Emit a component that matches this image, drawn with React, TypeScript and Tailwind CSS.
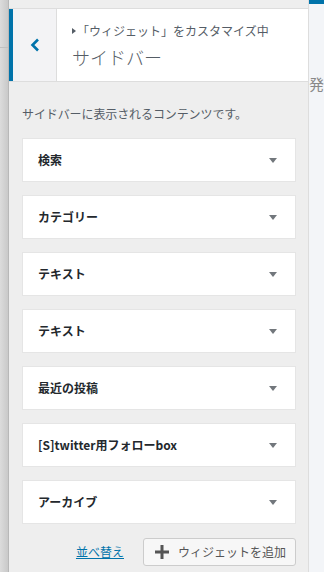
import { FC } from "react";

const widgets = [
  "検索",
  "カテゴリー",
  "テキスト",
  "テキスト",
  "最近の投稿",
  "[S]twitter用フォローbox",
  "アーカイブ",
];

const WidgetRow: FC<{ title: string }> = ({ title }) => (
  <div className="flex items-center h-[44px] w-[274px] ml-[13px] bg-white border border-[#e5e5e5] pl-[15px] pr-[18px]">
    <span className="flex-1 text-[12px] font-bold text-[#23282d]">{title}</span>
    {/* toggle arrow */}
    <svg width="8" height="5" viewBox="0 0 8 5" className="mt-[1px]">
      <path d="M0 0h8L4 5z" fill="#72777c" />
    </svg>
  </div>
);

const App: FC = () => (
  <div
    className="w-[324px] h-[572px] flex overflow-hidden bg-[#f3f5f8]"
    style={{ fontFamily: '"Noto Sans CJK JP", "Noto Sans", sans-serif' }}
  >
    {/* Left edge strip */}
    <div className="w-[9px] flex flex-col bg-gradient-to-r from-[#dcdcdc] to-[#c9c9c9] border-r border-[#b8b8b8]">
      <div className="h-[48px] border-b border-[#c0c0c0]" />
    </div>

    {/* Customizer panel */}
    <div className="w-[300px] flex flex-col bg-[#eeeeee] border-r border-[#dddddd]">
      <div className="h-[9px] border-b border-[#dddddd]" />

      {/* Header */}
      <div className="flex h-[73px] bg-white border-b border-[#dddddd]">
        <button className="w-[48px] flex items-center justify-center bg-[#f3f3f5] border-l-4 border-[#0073aa] border-r border-r-[#dddddd]">
          <svg width="10" height="14" viewBox="0 0 10 14">
            <path d="M8 1.5L2.5 7 8 12.5" stroke="#0073aa" strokeWidth="2.6" fill="none" />
          </svg>
        </button>
        <div className="flex flex-col pl-[15px] pt-[13px] text-[#555d66]">
          <div className="flex items-center text-[12px] leading-[18px]">
            <svg width="4" height="6" viewBox="0 0 4 6" className="mr-[1px]">
              <path d="M0 0l4 3-4 3z" fill="#555d66" />
            </svg>
            「ウィジェット」をカスタマイズ中
          </div>
          <div className="text-[18px] leading-[24px] font-light mt-[5px]">サイドバー</div>
        </div>
      </div>

      {/* Description */}
      <p className="px-[13px] pt-[25px] pb-[17px] text-[12px] leading-[14px] tracking-[-0.1px] text-[#555d66]">
        サイドバーに表示されるコンテンツです。
      </p>

      {/* Widgets */}
      <div className="flex flex-col gap-[13px]">
        {widgets.map((w, i) => (
          <WidgetRow key={i} title={w} />
        ))}
      </div>

      {/* Actions */}
      <div className="flex items-center justify-end pr-[12px] mt-[14px]">
        <a className="text-[12px] text-[#0073aa] underline mr-[19px]">並べ替え</a>
        <button className="flex items-center h-[28px] w-[153px] pl-[11px] bg-[#f7f7f7] border border-[#cccccc] rounded-[3px] text-[12px] text-[#555555]">
          <svg width="14" height="14" viewBox="0 0 14 14" className="mr-[9px]">
            <path d="M5.5 0h3v5.5H14v3H8.5V14h-3V8.5H0v-3h5.5z" fill="#555555" />
          </svg>
          ウィジェットを追加
        </button>
      </div>
    </div>

    {/* Preview edge */}
    <div className="flex-1 flex flex-col">
      <div className="h-[4px] bg-[#0073aa]" />
      <div className="mt-[71px] text-[15px] text-[#888888] leading-[18px]">発</div>
    </div>
  </div>
);

export default App;
